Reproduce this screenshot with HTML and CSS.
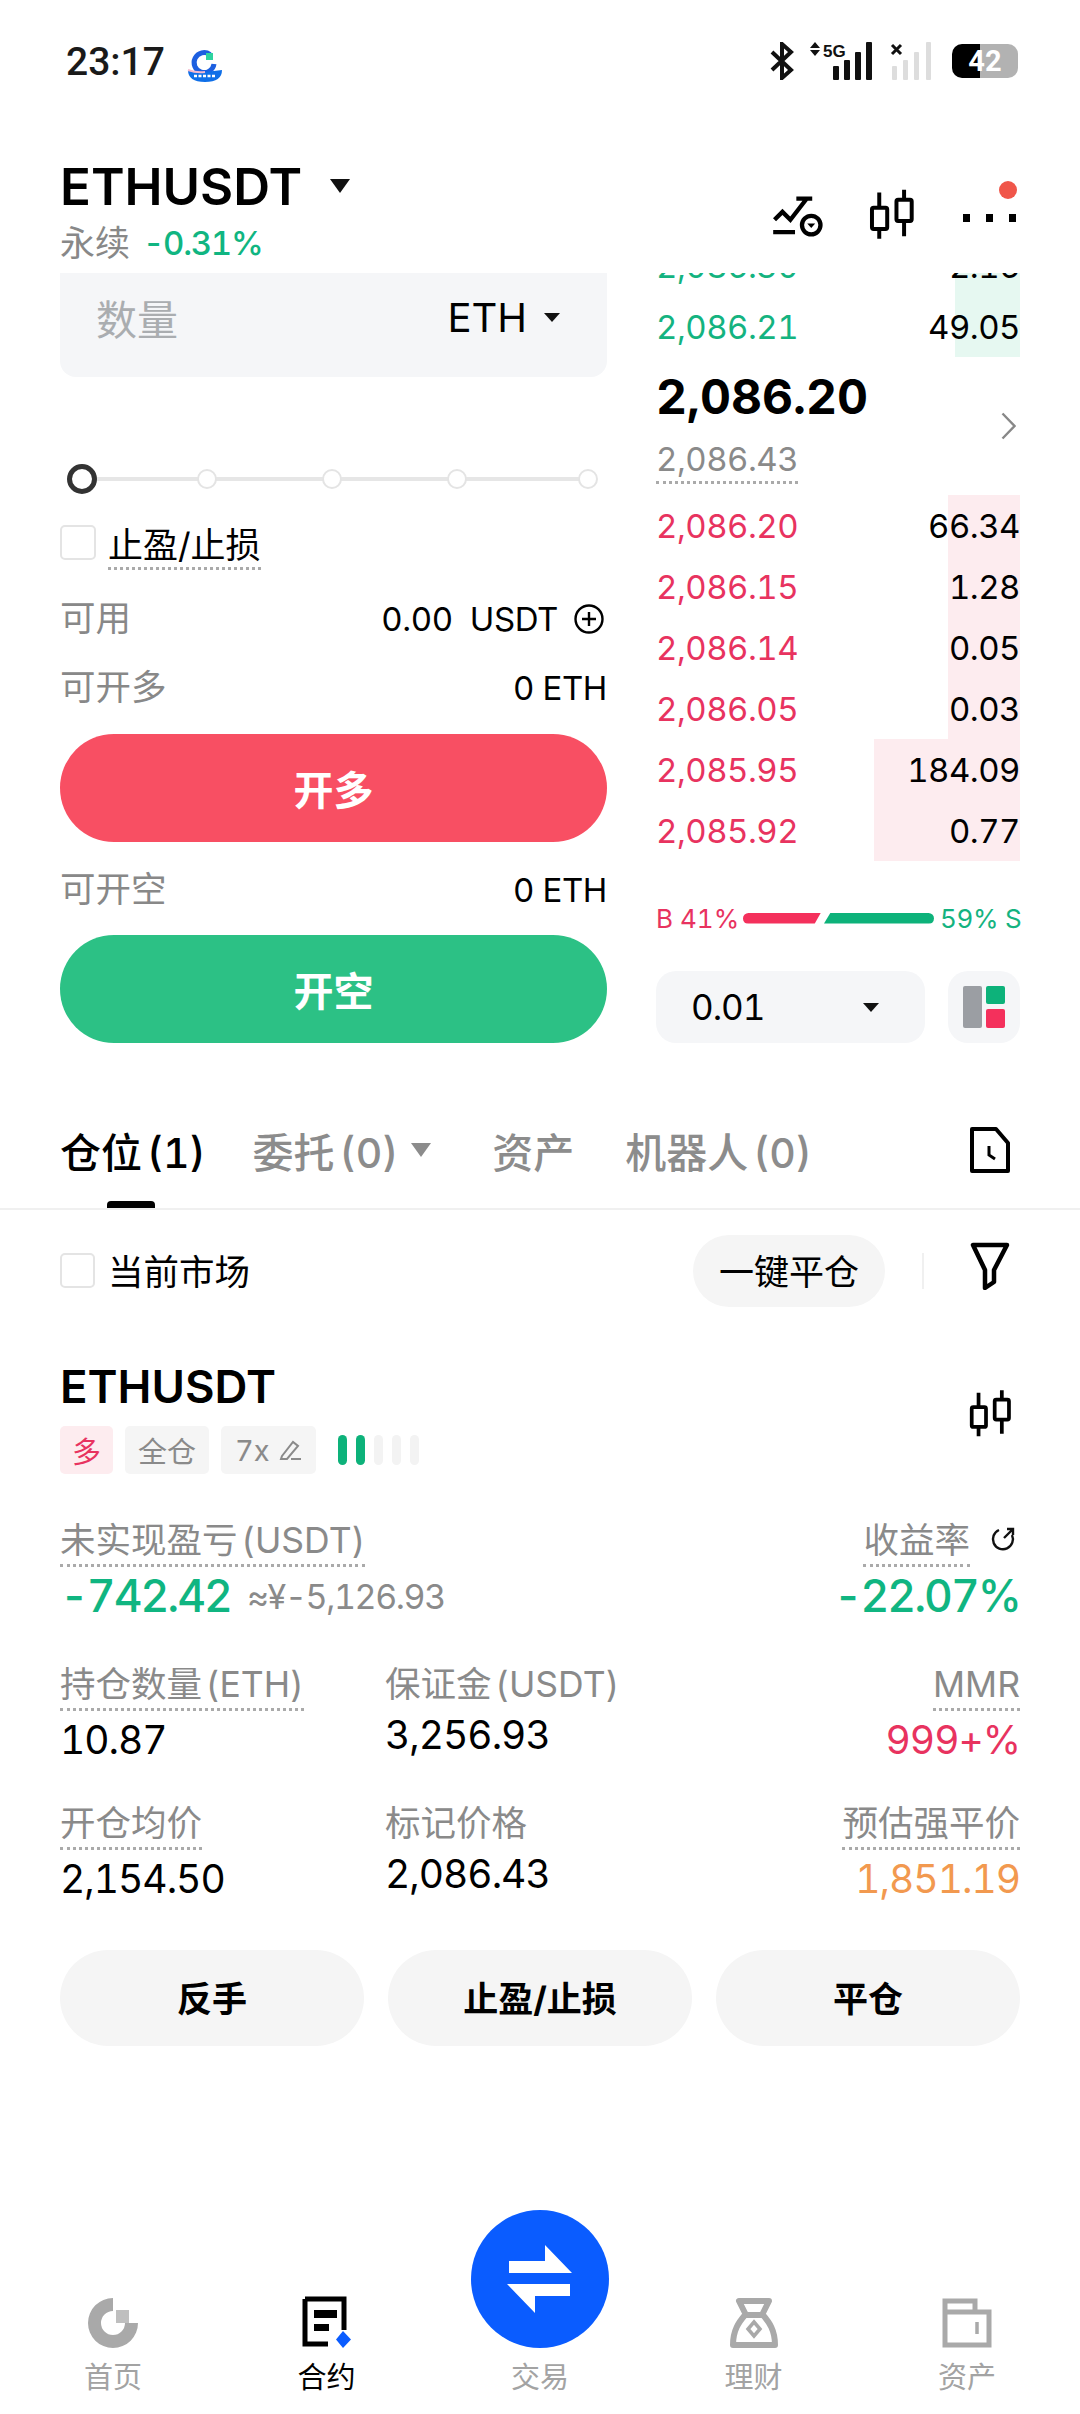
FILE: index.html
```html
<!DOCTYPE html>
<html lang="zh-CN">
<head>
<meta charset="utf-8">
<title>ETHUSDT</title>
<link rel="stylesheet" href="styles.css">
</head>
<body>
<div class="page">
  <div class="status">
    <div class="status-left">
      <span class="time">23:17</span>
      <svg class="app-logo" viewBox="0 0 36 33" width="36" height="33"><path d="M23 5.5A10 10 0 1 0 27 15" fill="none" stroke="#1d5fe0" stroke-width="5"/><rect x="19" y="4" width="7" height="7" fill="#2ed3a0"/><path d="M1 21q8 3 17 2t17-2q0 12-17 12T1 21z" fill="#0f6fe8"/><path d="M1 21q8 3 17 2" stroke="#f3b8cc" stroke-width="2" fill="none"/><path d="M7 27h22" stroke="#fff" stroke-width="2.5" stroke-dasharray="3 1.5"/></svg>
    </div>
    <div class="status-right">
      <svg width="24" height="38" viewBox="0 0 24 38" fill="none" stroke="#111" stroke-width="4"><path d="M2 10l19 18-9 8V2l9 8L2 28"/></svg>
      <svg width="64" height="38" viewBox="0 0 64 38"><path d="M5 0l5 6H0zM5 14l5-6H0z" fill="#111"/><text x="13" y="15" class="net-text">5G</text><rect x="23" y="24" width="6" height="14" rx="1" fill="#111"/><rect x="34" y="18" width="6" height="20" rx="1" fill="#111"/><rect x="45" y="10" width="6" height="28" rx="1" fill="#111"/><rect x="56" y="0" width="6" height="38" rx="1" fill="#111"/></svg>
      <svg width="42" height="38" viewBox="0 0 42 38"><path d="M2 3l9 9M11 3l-9 9" stroke="#111" stroke-width="3"/><rect x="2" y="24" width="5" height="14" rx="1" fill="#ddd"/><rect x="13" y="18" width="5" height="20" rx="1" fill="#ddd"/><rect x="24" y="10" width="5" height="28" rx="1" fill="#ddd"/><rect x="36" y="0" width="5" height="38" rx="1" fill="#ddd"/></svg>
      <span class="battery">42</span>
    </div>
  </div>

  <header class="head">
    <div class="head-left">
      <div class="symbol-row"><span class="symbol">ETHUSDT</span><i class="tri tri-lg"></i></div>
      <div class="sub"><span class="sub-label">永续</span><span class="sub-change">-0.31%</span></div>
    </div>
    <div class="head-icons">
      <svg width="50" height="43" viewBox="100 515 150 130" fill="none" stroke="#000" stroke-width="13"><path d="M104 590l24-24 24 24 48-62M170 526h48M100 627h66"/><circle cx="215" cy="606" r="28"/><path d="M203 601h24l-12 14z" fill="#000" stroke="none"/></svg>
      <svg class="ic-candle" width="48" height="50" viewBox="390 505 145 150" fill="#fff" stroke="#000" stroke-width="12"><path d="M424 515v140M499 507v140"/><rect x="402" y="561" width="46" height="64" rx="5"/><rect x="476" y="537" width="46" height="64" rx="5"/></svg>
      <div class="more"><i></i><i></i><i></i><b class="red-dot"></b></div>
    </div>
  </header>

  <main class="trade">
    <section class="form">
      <div class="qty"><span class="qty-ph">数量</span><span class="qty-unit">ETH<i class="tri tri-sm"></i></span></div>
      <div class="slider"><span class="knob knob-on"></span><span class="knob"></span><span class="knob"></span><span class="knob"></span><span class="knob knob-end"></span></div>
      <div class="tp"><span class="check"></span><span class="tp-label">止盈/止损</span></div>
      <div class="line line-first"><span class="muted">可用</span><span class="val">0.00&nbsp;&nbsp;USDT<svg class="plus" width="30" height="30" viewBox="0 0 30 30" fill="none" stroke="#000" stroke-width="2.4"><circle cx="15" cy="15" r="13.5"/><path d="M15 8v14M8 15h14"/></svg></span></div>
      <div class="line"><span class="muted">可开多</span><span class="val">0 ETH</span></div>
      <button class="act act-long">开多</button>
      <div class="line line-short"><span class="muted">可开空</span><span class="val">0 ETH</span></div>
      <button class="act act-short">开空</button>
    </section>

    <section class="book">
      <div class="row row-clip bid"><span class="depth depth-bid" style="width:65px"></span><span class="p">2,086.30</span><span class="q">2.16</span></div>
      <div class="row bid"><span class="depth depth-bid" style="width:65px"></span><span class="p">2,086.21</span><span class="q">49.05</span></div>
      <div class="mid">
        <div><div class="last">2,086.20</div><span class="mark">2,086.43</span></div>
        <svg class="chev" width="15" height="28" viewBox="0 0 15 28" fill="none" stroke="#888" stroke-width="2.4"><path d="M1.5 1.5L13.5 14 1.5 26.5"/></svg>
      </div>
      <div class="row ask"><span class="depth depth-ask" style="width:72px"></span><span class="p">2,086.20</span><span class="q">66.34</span></div>
      <div class="row ask"><span class="depth depth-ask" style="width:72px"></span><span class="p">2,086.15</span><span class="q">1.28</span></div>
      <div class="row ask"><span class="depth depth-ask" style="width:72px"></span><span class="p">2,086.14</span><span class="q">0.05</span></div>
      <div class="row ask"><span class="depth depth-ask" style="width:72px"></span><span class="p">2,086.05</span><span class="q">0.03</span></div>
      <div class="row ask"><span class="depth depth-ask" style="width:146px"></span><span class="p">2,085.95</span><span class="q">184.09</span></div>
      <div class="row ask"><span class="depth depth-ask" style="width:146px"></span><span class="p">2,085.92</span><span class="q">0.77</span></div>
      <div class="ratio"><span class="r-b">B 41%</span><span class="bar bar-b"></span><span class="bar bar-s"></span><span class="r-s">59% S</span></div>
      <div class="tools">
        <div class="step"><span>0.01</span><i class="tri tri-sm"></i></div>
        <div class="layout"><svg width="42" height="42" viewBox="0 0 42 42"><rect width="19" height="42" rx="2" fill="#9b9ea3"/><rect x="23" width="19" height="18" rx="2" fill="#0db27a"/><rect x="23" y="23" width="19" height="19" rx="2" fill="#f4305c"/></svg></div>
      </div>
    </section>
  </main>

  <nav class="tabs">
    <span class="tab tab-on">仓位 (1)</span>
    <span class="tab tab-order">委托 (0)<i class="tri tri-grey"></i></span>
    <span class="tab tab-asset">资产</span>
    <span class="tab tab-bot">机器人 (0)</span>
    <svg class="doc" width="40" height="46" viewBox="0 0 40 46" fill="none" stroke="#000" stroke-width="4"><path d="M2 2h24l12 14v28H2z" stroke-linejoin="round"/><path d="M19 19v9l6 4" stroke-width="3"/></svg>
  </nav>

  <div class="filter">
    <span class="check check-sm"></span><span class="filter-label">当前市场</span>
    <button class="close-all">一键平仓</button>
    <span class="vline"></span>
    <svg width="40" height="48" viewBox="0 0 40 48" fill="none" stroke="#000" stroke-width="4.500" stroke-linejoin="round"><path d="M3 3h34l-13 25v12l-9 6V28z"/></svg>
  </div>

  <section class="pos">
    <div class="pos-head">
      <div>
        <div class="pos-sym">ETHUSDT</div>
        <div class="tags">
          <span class="tag tag-red">多</span>
          <span class="tag">全仓</span>
          <span class="tag tag-lev">7x<svg width="24" height="22" viewBox="0 0 24 22" fill="none" stroke="#8a8a8a" stroke-width="2"><path d="M4 17L15 3l5 4L9 20l-6 0zM13 20h10"/></svg></span>
          <span class="lev"><i class="on"></i><i class="on"></i><i></i><i></i><i></i></span>
        </div>
      </div>
      <svg class="ic-candle-sm" width="45" height="48" viewBox="390 505 145 150" fill="#fff" stroke="#000" stroke-width="12"><path d="M424 515v140M499 507v140"/><rect x="402" y="561" width="46" height="64" rx="5"/><rect x="476" y="537" width="46" height="64" rx="5"/></svg>
    </div>

    <div class="pnl">
      <div>
        <span class="lbl dot">未实现盈亏 (USDT)</span>
        <div class="pnl-val"><span class="big green">-742.42</span><span class="approx">≈¥-5,126.93</span></div>
      </div>
      <div class="right">
        <div class="roe"><span class="lbl dot">收益率</span><svg width="26" height="26" viewBox="0 0 26 26" fill="none" stroke="#111" stroke-width="2.4"><path d="M9 4a10 10 0 1 0 13 5M14 12l9-9M17 3h6v6"/></svg></div>
        <div class="big green">-22.07%</div>
      </div>
    </div>

    <div class="metrics">
      <div><span class="lbl dot">持仓数量 (ETH)</span><div class="num">10.87</div></div>
      <div><span class="lbl">保证金 (USDT)</span><div class="num">3,256.93</div></div>
      <div class="right"><span class="lbl dot">MMR</span><div class="num red">999+%</div></div>
      <div><span class="lbl dot">开仓均价</span><div class="num">2,154.50</div></div>
      <div><span class="lbl">标记价格</span><div class="num">2,086.43</div></div>
      <div class="right"><span class="lbl dot">预估强平价</span><div class="num orange">1,851.19</div></div>
    </div>

    <div class="pos-btns"><button>反手</button><button>止盈/止损</button><button>平仓</button></div>
  </section>

  <footer class="nav">
    <div class="nav-item">
      <svg width="50" height="50" viewBox="0 0 50 50"><path d="M25 0v13a12 12 0 1 0 12 12h13A25 25 0 1 1 25 0z" fill="#a9a9a9"/><rect x="28" y="12" width="13" height="13" fill="#a9a9a9" opacity=".75"/></svg>
      <span>首页</span>
    </div>
    <div class="nav-item nav-on">
      <svg width="50" height="52" viewBox="0 0 50 52"><path d="M3 3h39v31M26 48H3V3" fill="none" stroke="#000" stroke-width="5"/><path d="M12 14h23v8H12zM12 28h15v7H12z" fill="#000"/><path d="M41 35l8 8.500-8 8.500-7-8.500z" fill="#0a5cff"/></svg>
      <span>合约</span>
    </div>
    <div class="nav-item nav-swap">
      <div class="fab"><svg width="66" height="68" viewBox="0 0 66 68" fill="#fff"><path d="M2 16h36V0l27 28H2zM0 39h63v12H28v17z"/></svg></div>
      <span>交易</span>
    </div>
    <div class="nav-item">
      <svg width="48" height="50" viewBox="0 0 48 50" fill="none" stroke="#a9a9a9" stroke-width="6"><path d="M9 3h30l-7 14H16zM15 17C9 24 3 32 3 47h42c0-15-6-23-12-30z" stroke-linejoin="round"/><path d="M24 24l6 7-6 7-6-7z" stroke-width="3.500"/></svg>
      <span>理财</span>
    </div>
    <div class="nav-item">
      <svg width="50" height="50" viewBox="0 0 50 50" fill="none" stroke="#a9a9a9" stroke-width="5"><path d="M3 14V3h30v11M3 14h44v33H3z"/><path d="M35 24v12" stroke-width="3.500"/></svg>
      <span>资产</span>
    </div>
  </footer>
</div>
</body>
</html>
```
FILE: styles.css
```css
* { box-sizing: border-box; }
html, body { margin: 0; padding: 0; background: #fff; }
body { font-family: Inter, "Noto Sans CJK SC", sans-serif; color: #000; font-variant-numeric: tabular-nums; }
i, b { display: block; font-style: normal; }
button { font-family: inherit; border: 0; padding: 0; cursor: pointer; }

.page { width: 1080px; height: 2414px; display: flex; flex-direction: column; overflow: hidden; }

/* status bar */
.status { height: 160px; padding: 42px 60px 0 66px; display: flex; justify-content: space-between; align-items: flex-start; }
.status-left { display: flex; align-items: center; gap: 22px; height: 40px; }
.time { font-family: Roboto, sans-serif; font-size: 39px; font-weight: 500; color: #1a1a1a; }
.app-logo { margin-top: 6px; }
.status-right { display: flex; align-items: center; gap: 16px; margin-right: 2px; }
.net-text { font: 700 17px "Liberation Sans", sans-serif; fill: #111; }
.battery { width: 66px; height: 34px; margin-left: 4px; border-radius: 10px; background: linear-gradient(90deg, #000 42%, #b2b2b2 42%); color: #fff; font: 700 29px/34px Roboto, sans-serif; text-align: center; }

/* header */
.head { height: 113px; padding: 0 60px; display: flex; justify-content: space-between; }
.symbol-row { display: flex; align-items: center; gap: 28px; height: 54px; }
.symbol { font-size: 51px; font-weight: 600; line-height: 54px; }
.tri { width: 0; height: 0; border-style: solid; border-color: #111 transparent transparent; }
.tri-lg { border-width: 14px 10px 0; margin-top: -2px; }
.tri-sm { border-width: 9px 8px 0; }
.tri-grey { border-width: 14px 10px 0; border-top-color: #8c8c8c; margin-left: 13px; }
.sub { display: flex; align-items: center; gap: 13px; margin-top: 9px; font-size: 35px; line-height: 40px; }
.sub-label { color: #888; }
.sub-change { color: #10b581; font-weight: 500; font-size: 33px; letter-spacing: -1.300px; }
.head-icons { display: flex; align-items: flex-end; gap: 45px; height: 78px; }
.head-icons .ic-candle { margin-bottom: -1px; }
.more { position: relative; display: flex; gap: 16px; align-self: flex-end; margin: 0 4px 16px 2px; }
.more i { width: 7px; height: 8px; background: #000; }
.red-dot { position: absolute; right: -1px; top: -33px; width: 18px; height: 18px; border-radius: 50%; background: #f0564a; }

/* trade area */
.trade { height: 770px; padding: 0 60px; display: flex; gap: 49px; overflow: hidden; }
.form { width: 547px; flex: none; }
.book { width: 364px; flex: none; }

.qty { height: 104px; padding: 0 47px 15px 36px; background: #f5f6f8; border-radius: 0 0 16px 16px; display: flex; justify-content: space-between; align-items: center; }
.qty-ph { font-size: 41px; color: #aaadb0; margin-top: -2px; }
.qty-unit { display: flex; align-items: center; gap: 17px; font-size: 40px; }
.slider { position: relative; margin-top: 87px; height: 30px; padding-left: 7px; display: flex; align-items: center; gap: 105px; }
.slider::before { content: ""; position: absolute; left: 20px; right: 20px; top: 13px; height: 4px; background: #e6e6e6; }
.knob { position: relative; width: 20px; height: 20px; border: 2.500px solid #e4e4e4; border-radius: 50%; background: #fff; flex: none; }
.knob-on { width: 30px; height: 30px; border: 5px solid #333; margin-right: -5px; }
.knob-end { margin-left: 6px; }
.tp { margin-top: 31px; display: flex; gap: 12px; height: 45px; }
.check { width: 36px; height: 35px; border: 2.500px solid #e4e4e4; border-radius: 5px; flex: none; }
.tp-label { font-size: 35px; line-height: 41px; height: 45px; border-bottom: 3px dotted #aaa; }
.line { margin-top: 25px; height: 44px; display: flex; justify-content: space-between; align-items: center; font-size: 33px; }
.line-first { margin-top: 27px; }
.line-short { margin-top: 26px; }
.muted { color: #888; font-size: 35.500px; line-height: 44px; }
.val { display: flex; align-items: center; color: #000; letter-spacing: -.4px; }
.plus { margin-left: 16px; margin-right: 3px; }
.act { display: block; width: 100%; height: 108px; margin-top: 24px; border-radius: 54px; color: #fff; font-size: 40px; font-weight: 700; }
.line-short + .act { margin-top: 23px; }
.act-long { background: #f84f63; }
.act-short { background: #2cc185; }

/* order book */
.row { position: relative; height: 61px; display: flex; justify-content: space-between; align-items: center; font-size: 33px; letter-spacing: -.5px; }
.row-clip { margin-top: -38px; }
.row span { position: relative; }
.row .depth { position: absolute; right: 0; top: 0; bottom: 0; }
.depth-bid { background: #e6f8f1; }
.depth-ask { background: #fdecef; }
.bid .p { color: #14b380; }
.ask .p { color: #e8335f; }
.mid { height: 138px; display: flex; justify-content: space-between; align-items: flex-start; padding-right: 4px; }
.chev { align-self: center; }
.last { font-size: 48px; font-weight: 700; line-height: 80px; }
.mark { display: inline-block; margin-top: 2px; padding-bottom: 2px; font-size: 33px; letter-spacing: -.5px; line-height: 40px; color: #8a8a8a; border-bottom: 3px dotted #aaa; }
.ratio { margin-top: 42px; height: 30px; display: flex; align-items: center; font-size: 26px; }
.r-b { color: #e8335f; width: 87px; flex: none; white-space: nowrap; }
.r-s { color: #14b380; margin-left: 6px; white-space: nowrap; letter-spacing: -.3px; }
.bar { height: 11px; flex: none; }
.bar-b { width: 78px; background: #f4305c; border-radius: 6px 0 0 6px; clip-path: polygon(0 0, 100% 0, 92% 100%, 0 100%); }
.bar-s { width: 110px; margin-left: 3px; background: #0db27a; border-radius: 0 6px 6px 0; clip-path: polygon(6% 0, 100% 0, 100% 100%, 0 100%); }
.tools { margin-top: 38px; display: flex; justify-content: space-between; }
.step { width: 269px; height: 72px; padding: 0 46px 0 35px; border-radius: 20px; background: #f5f6f8; display: flex; justify-content: space-between; align-items: center; font-size: 35px; letter-spacing: -1px; }
.layout { width: 72px; height: 72px; border-radius: 20px; background: #f5f6f8; display: flex; align-items: center; justify-content: center; }

/* tabs */
.tabs { position: relative; margin-top: 60px; height: 107px; padding: 0 70px 0 60px; display: flex; border-bottom: 2px solid #f0f0f0; }
.tab { display: flex; align-items: center; height: 93px; font-size: 41px; word-spacing: -6px; color: #8c8c8c; font-weight: 500; white-space: nowrap; }
.tab-on { color: #000; }
.tab-on::after { content: ""; position: absolute; left: 107px; bottom: 0; width: 48px; height: 7px; border-radius: 4px 4px 0 0; background: #000; }
.tab-order { margin-left: 47px; }
.tab-asset { margin-left: 61px; }
.tab-bot { margin-left: 51px; }
.doc { margin-left: auto; margin-top: 24px; }

.filter { height: 98px; padding: 25px 70px 0 60px; display: flex; align-items: flex-start; }
.check-sm { margin-top: 18px; width: 35px; height: 35px; }
.filter-label { margin-left: 13px; margin-top: 13px; font-size: 35.500px; line-height: 50px; }
.close-all { margin-left: auto; width: 192px; height: 72px; padding-bottom: 4px; border-radius: 36px; background: #f5f5f5; font-size: 35px; color: #000; }
.vline { width: 2px; height: 36px; margin: 18px 46px 0 37px; background: #f0f0f0; }
.filter svg { margin-top: 7px; }

/* position */
.pos { padding: 50px 60px 0; }
.pos-head { display: flex; justify-content: space-between; }
.pos-sym { font-size: 45.500px; font-weight: 600; line-height: 52px; margin-top: 3px; }
.ic-candle-sm { margin: 31px 7px 0 0; }
.tags { margin-top: 13px; display: flex; gap: 12px; align-items: center; }
.tag { display: flex; align-items: center; gap: 6px; height: 48px; padding: 0 13px; background: #f5f5f5; border-radius: 5px; font-size: 29px; color: #8a8a8a; }
.tag-lev { padding: 0 14px; gap: 8px; }
.tag-red { background: #fdecef; color: #e8335f; padding: 0 12px; }
.lev { display: flex; gap: 9px; margin-left: 10px; }
.lev i { width: 9px; height: 30px; border-radius: 5px; background: #f3f3f3; }
.lev .on { background: #0db27a; }

.lbl { display: inline-block; font-size: 35.500px; word-spacing: -6px; line-height: 42px; color: #8a8a8a; white-space: nowrap; }
.dot { padding-bottom: 2px; border-bottom: 3px dotted #aaa; }
.right { text-align: right; }
.pnl { display: flex; justify-content: space-between; margin-top: 46px; }
.pnl-val { display: flex; align-items: center; gap: 16px; }
.big { font-size: 44.500px; font-weight: 500; line-height: 58px; letter-spacing: -2px; }
.green { color: #10b581; }
.red { color: #e8335f; }
.orange { color: #f2994f; }
.approx { font-size: 34px; letter-spacing: -1.400px; color: #8a8a8a; }
.roe { display: flex; align-items: flex-start; justify-content: flex-end; gap: 20px; }
.roe svg { margin: 6px 4px 0 0; }
.metrics { margin-top: 39px; display: grid; grid-template-columns: 325px 1fr 1fr; row-gap: 38px; }
.num { font-size: 39px; letter-spacing: -1px; line-height: 50px; margin-top: 4px; }
.pos-btns { margin-top: 46px; display: grid; grid-template-columns: repeat(3, 1fr); gap: 24px; }
.pos-btns button { height: 96px; padding-bottom: 3px; border-radius: 48px; background: #f5f5f5; font-size: 35px; font-weight: 700; color: #000; }

/* bottom nav */
.nav { margin-top: auto; padding: 0 6px 16px; display: grid; grid-template-columns: repeat(5, 213.5px); justify-content: center; align-items: end; }
.nav-item { display: flex; flex-direction: column; align-items: center; font-size: 29px; line-height: 40px; color: #a3a3a3; }
.nav-item svg { display: block; }
.nav-item span { margin-top: 10px; }
.nav-on { color: #000; }
.nav-swap .fab { width: 138px; height: 138px; border-radius: 50%; background: #0a5cff; display: flex; align-items: center; justify-content: center; }
```
